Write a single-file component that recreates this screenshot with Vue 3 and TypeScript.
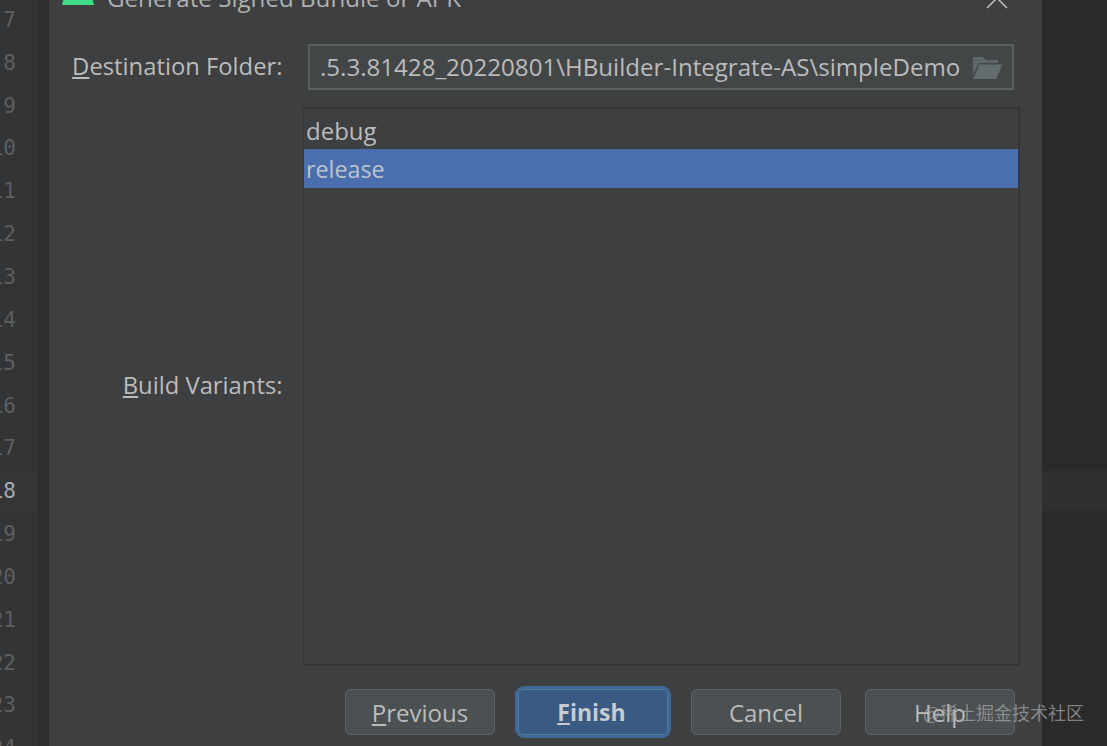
<script setup lang="ts">
const lines: { n: string; current?: boolean }[] = [
  { n: '7' }, { n: '8' }, { n: '9' }, { n: '10' }, { n: '11' }, { n: '12' }, { n: '13' }, { n: '14' }, { n: '15' },
  { n: '16' }, { n: '17' }, { n: '18', current: true }, { n: '19' }, { n: '20' }, { n: '21' }, { n: '22' }, { n: '23' }, { n: '24' },
]
const buttons = [
  { key: 'P', rest: 'revious', cls: '' },
  { key: 'F', rest: 'inish', cls: 'primary' },
  { key: '', rest: 'Cancel', cls: 'cancel' },
  { key: '', rest: 'Help', cls: 'help' },
]
</script>

<template>
  <div class="screen">
    <div class="gutter">
      <div class="numbers">
        <div v-for="l in lines" :key="l.n" class="num" :class="{ current: l.current }">{{ l.n }}</div>
      </div>
      <div class="shade"></div>
    </div>

    <div class="dialog">
      <div class="title">
        <svg class="logo" width="32" height="10" viewBox="0 0 32 10"><path d="M2.5 0 H29.5 L32 10 H0 Z" fill="#3ddc84" /></svg>
        <span class="title-text">Generate Signed Bundle or APK</span>
        <svg class="close" width="22" height="22" viewBox="0 0 22 22"><path d="M1 1 L21 21 M21 1 L1 21" stroke="#bcbcbc" stroke-width="1.6" fill="none" /></svg>
      </div>

      <div class="row-dest">
        <label class="label"><u>D</u>estination Folder:</label>
        <div class="field">
          <span class="path">.5.3.81428_20220801\HBuilder-Integrate-AS\simpleDemo</span>
          <svg class="folder" width="31" height="24" viewBox="0 0 31 24">
            <path d="M1 1 H11 L14 4 H26 V7 H7 L1 19 Z" fill="#5f6769" />
            <path d="M7.5 8.5 H30.5 L24 23 H1 Z" fill="#646c6e" />
          </svg>
        </div>
      </div>

      <div class="row-variants">
        <label class="label"><u>B</u>uild Variants:</label>
        <div class="list">
          <div class="item">debug</div>
          <div class="item selected">release</div>
        </div>
      </div>

      <div class="buttons">
        <button v-for="b in buttons" :key="b.rest" class="btn" :class="b.cls"><u v-if="b.key">{{ b.key }}</u>{{ b.rest }}</button>
      </div>
    </div>

    <div class="right">
      <div class="caret-line"></div>
    </div>

    <div class="watermark">@稀土掘金技术社区</div>
  </div>
</template>

<style>
html, body { margin: 0; background: #2a2a2a; overflow: hidden; }
</style>

<style scoped>
.screen {
  position: relative;
  display: flex;
  width: 1107px;
  height: 746px;
  overflow: hidden;
  background: #2a2a2a;
  font-family: "Open Sans", "Noto Sans", sans-serif;
  color: #bbbbbb;
}
.gutter { display: flex; width: 49px; flex: none; background: #323436; position: relative; }
.gutter::before {
  content: "";
  position: absolute;
  left: 0;
  top: 470px;
  width: 37px;
  height: 42px;
  background: #343536;
}
.numbers { width: 37px; margin-top: -1.5px; overflow: hidden; position: relative; }
.num {
  width: 16px;
  height: 42.85px;
  display: flex;
  align-items: center;
  justify-content: flex-end;
  font-family: "DejaVu Sans Mono", monospace;
  font-size: 21px;
  color: #5c5f60;
  white-space: nowrap;
}
.num.current { color: #a9a8a8; }
.shade { width: 12px; background: #2d2f30; position: relative; }
.dialog {
  width: 993px;
  flex: none;
  background: #3e3f41;
  display: flex;
  flex-direction: column;
}
.title {
  height: 44px;
  margin-top: -20px;
  display: flex;
  align-items: flex-start;
  padding: 4px 34px 0 13px;
  box-sizing: content-box;
}
.logo { margin-top: 11px; flex: none; }
.title-text { margin-left: 13px; font-size: 24.15px; line-height: 28px; color: #b0b0b0; white-space: nowrap; flex: 1; }
.close { margin-top: 3px; flex: none; }
.row-dest {
  display: flex;
  align-items: center;
  height: 46px;
  margin-top: 16px;
}
.label {
  width: 233.5px;
  flex: none;
  text-align: right;
  font-size: 23.8px;
  padding-bottom: 3px;
  color: #bbbbbb;
  white-space: nowrap;
}
.field {
  margin-left: 25.5px;
  width: 706px;
  height: 46px;
  box-sizing: border-box;
  border: 2px solid #5a5f60;
  background: #434647;
  display: flex;
  align-items: center;
  padding: 0 9px 0 10px;
}
.path { flex: 1; font-size: 24.1px; color: #bbbbbb; white-space: nowrap; overflow: hidden; padding-bottom: 2px; }
.folder { flex: none; margin-top: 1px; }
.row-variants {
  display: flex;
  align-items: center;
  margin-top: 17px;
  height: 559px;
}
.list {
  margin-left: 20.5px;
  width: 717px;
  height: 559px;
  box-sizing: border-box;
  border: solid #343638;
  border-width: 2px 2px 2px 1px;
  padding-top: 1px;
}
.item {
  height: 39px;
  box-sizing: border-box;
  display: flex;
  align-items: center;
  font-size: 24px;
  padding: 1px 0 0 2px;
}
.item.selected { background: #4b6eaf; color: #bcc3cd; font-size: 23.3px; }
.buttons {
  display: flex;
  margin-top: 23px;
  margin-left: 296px;
  gap: 21px;
}
.btn {
  width: 150px;
  height: 46px;
  box-sizing: border-box;
  border: 1.5px solid #5d6364;
  border-radius: 6px;
  background: #4b5052;
  color: #bbbbbb;
  font-family: inherit;
  font-size: 24px;
  padding: 0;
}
.btn.primary {
  width: 150px;
  margin: 0 2px;
  background: #385a83;
  border: 1.5px solid #537ba0;
  outline: 3px solid #3f6a98;
  border-radius: 6px;
  color: #c6ccd2;
  font-size: 23px;
  font-weight: 700;
  padding-right: 3px;
}
.btn.help { margin-left: 3px; }
.right { flex: 1; }
.caret-line { height: 40px; margin-top: 471px; background: #2f2f2f; }
.watermark {
  position: absolute;
  left: 923px;
  top: 700px;
  font-family: "Noto Sans CJK SC", sans-serif;
  font-size: 18px;
  line-height: 24px;
  color: rgba(170, 170, 170, 0.7);
  white-space: nowrap;
}
</style>
